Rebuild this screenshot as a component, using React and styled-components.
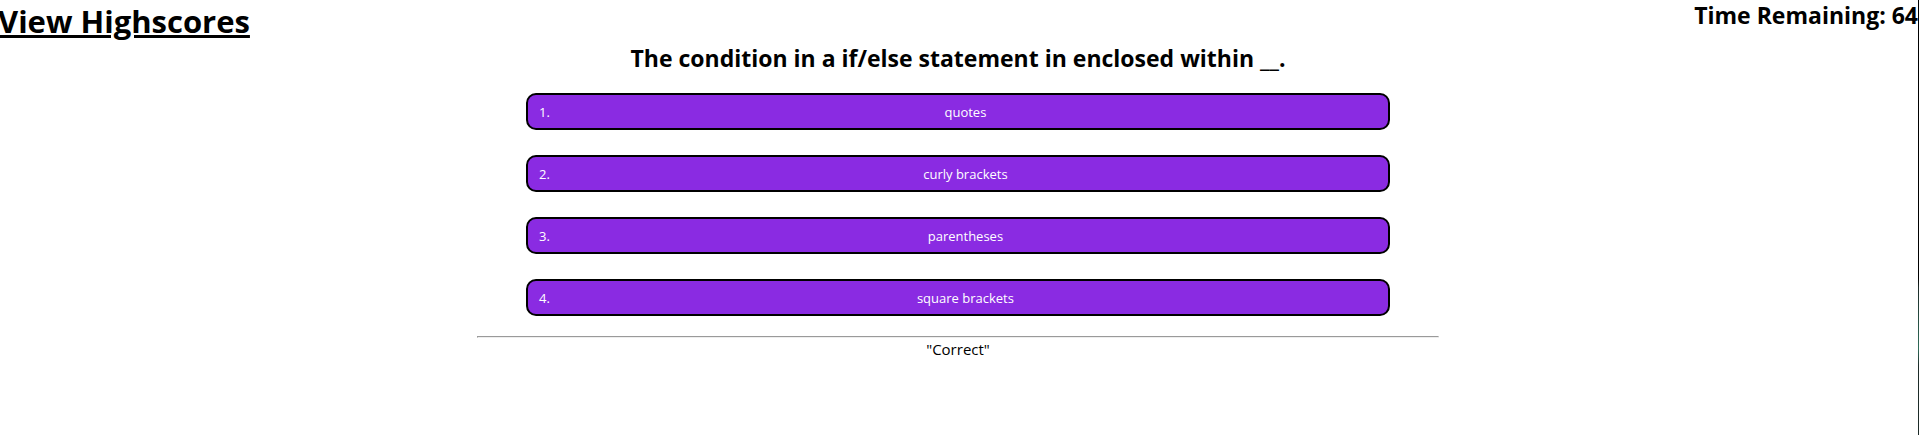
import React from "react";
import styled, { createGlobalStyle } from "styled-components";

const GlobalStyle = createGlobalStyle`
  *, *::before, *::after { box-sizing: border-box; }
  body {
    margin: 0;
    overflow-x: hidden;
    background: #fff;
    color: #000;
    font-family: "Segoe UI", "Open Sans", "Noto Sans", sans-serif;
  }
`;

const Page = styled.div`
  min-height: 100vh;
  margin-left: -2px;
  border-right: 1px solid #000;
  border-image: linear-gradient(#000 64%, #1d2b28 66%, #2f6b58 80%, #1d2b28 84%) 1;
`;

const Header = styled.header`
  display: flex;
  justify-content: space-between;
  align-items: flex-start;
`;

const HighscoresLink = styled.a`
  color: inherit;
  font-size: 31px;
  font-weight: 700;
  line-height: 43px;
  text-decoration: underline;
  text-decoration-thickness: 3px;
  text-underline-offset: 2px;
`;

const Timer = styled.p`
  margin: 0;
  font-size: 23px;
  font-weight: 700;
  line-height: 31px;
`;

const Quiz = styled.main`
  width: 50%;
  margin: 0 auto;
  text-align: center;
`;

const Question = styled.h2`
  margin: 0 0 19px;
  font-size: 23px;
  font-weight: 700;
  line-height: 31px;
`;

const Choices = styled.div`
  display: flex;
  flex-direction: column;
  align-items: center;
  gap: 25px;
`;

const Choice = styled.button`
  display: flex;
  align-items: center;
  gap: 4px;
  width: 90%;
  height: 37px;
  padding: 0 11px;
  border: 2px solid #000;
  border-radius: 10px;
  background: #8a2be2;
  color: #fff;
  font-family: inherit;
  font-size: 13px;
  line-height: 18px;
  cursor: pointer;
`;

const ChoiceLabel = styled.span`
  flex: 1;
`;

const Divider = styled.hr`
  margin: 20px -1px 0;
  border: 1px solid;
  border-color: #9a9a9a #eee #eee #9a9a9a;
`;

const Result = styled.p`
  margin: 0;
  font-size: 15px;
  line-height: 22px;
`;

const choices = ["quotes", "curly brackets", "parentheses", "square brackets"];

export default function App() {
  return (
    <>
      <GlobalStyle />
      <Page>
        <Header>
          <HighscoresLink href="#highscores">View Highscores</HighscoresLink>
          <Timer>Time Remaining: 64</Timer>
        </Header>
        <Quiz>
          <Question>The condition in a if/else statement in enclosed within __.</Question>
          <Choices>
            {choices.map((choice, index) => (
              <Choice key={choice} type="button">
                <span>{index + 1}.</span>
                <ChoiceLabel>{choice}</ChoiceLabel>
              </Choice>
            ))}
          </Choices>
          <Divider />
          <Result>"Correct"</Result>
        </Quiz>
      </Page>
    </>
  );
}
